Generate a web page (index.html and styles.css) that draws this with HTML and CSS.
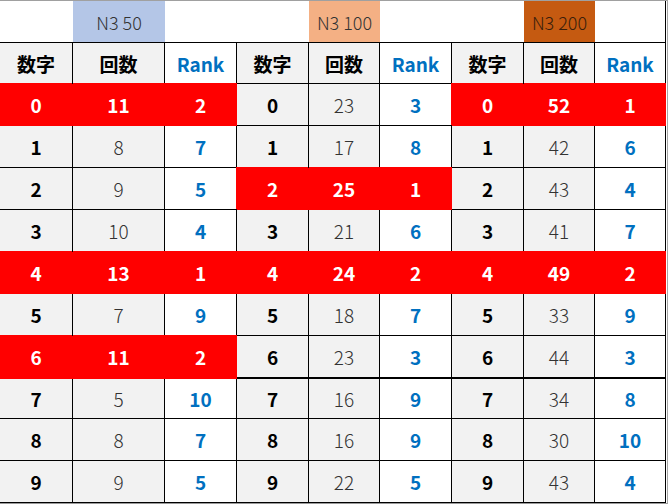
FILE: index.html
```html
<!DOCTYPE html>
<html lang="ja">
<head>
<meta charset="utf-8">
<title>N3</title>
<link rel="stylesheet" href="styles.css">
</head>
<body>
<div class="sheet">
  <div class="t"></div><div class="t t1">N3 50</div><div class="t"></div>
  <div class="t"></div><div class="t t2">N3 100</div><div class="t"></div>
  <div class="t"></div><div class="t t3">N3 200</div><div class="t tlast"></div>

  <div class="c d h">数字</div><div class="c n h">回数</div><div class="c r">Rank</div>
  <div class="c d h">数字</div><div class="c n h">回数</div><div class="c r">Rank</div>
  <div class="c d h">数字</div><div class="c n h">回数</div><div class="c r">Rank</div>

  <div class="c d hot first">0</div><div class="c n hot">11</div><div class="c r hot">2</div>
  <div class="c d">0</div><div class="c n">23</div><div class="c r">3</div>
  <div class="c d hot first">0</div><div class="c n hot">52</div><div class="c r hot">1</div>

  <div class="c d">1</div><div class="c n">8</div><div class="c r">7</div>
  <div class="c d">1</div><div class="c n">17</div><div class="c r">8</div>
  <div class="c d">1</div><div class="c n">42</div><div class="c r">6</div>

  <div class="c d">2</div><div class="c n">9</div><div class="c r">5</div>
  <div class="c d hot first">2</div><div class="c n hot">25</div><div class="c r hot">1</div>
  <div class="c d">2</div><div class="c n">43</div><div class="c r">4</div>

  <div class="c d">3</div><div class="c n">10</div><div class="c r">4</div>
  <div class="c d">3</div><div class="c n">21</div><div class="c r">6</div>
  <div class="c d">3</div><div class="c n">41</div><div class="c r">7</div>

  <div class="c d hot first">4</div><div class="c n hot">13</div><div class="c r hot">1</div>
  <div class="c d hot">4</div><div class="c n hot">24</div><div class="c r hot">2</div>
  <div class="c d hot">4</div><div class="c n hot">49</div><div class="c r hot">2</div>

  <div class="c d">5</div><div class="c n">7</div><div class="c r">9</div>
  <div class="c d">5</div><div class="c n">18</div><div class="c r">7</div>
  <div class="c d">5</div><div class="c n">33</div><div class="c r">9</div>

  <div class="c d thick hot first">6</div><div class="c n thick hot">11</div><div class="c r thick hot">2</div>
  <div class="c d thick">6</div><div class="c n thick">23</div><div class="c r thick">3</div>
  <div class="c d thick">6</div><div class="c n thick">44</div><div class="c r thick">3</div>

  <div class="c d">7</div><div class="c n">5</div><div class="c r">10</div>
  <div class="c d">7</div><div class="c n">16</div><div class="c r">9</div>
  <div class="c d">7</div><div class="c n">34</div><div class="c r">8</div>

  <div class="c d">8</div><div class="c n">8</div><div class="c r">7</div>
  <div class="c d">8</div><div class="c n">16</div><div class="c r">9</div>
  <div class="c d">8</div><div class="c n">30</div><div class="c r">10</div>

  <div class="c d">9</div><div class="c n">9</div><div class="c r">5</div>
  <div class="c d">9</div><div class="c n">22</div><div class="c r">5</div>
  <div class="c d">9</div><div class="c n">43</div><div class="c r">4</div>
</div>
</body>
</html>
```

FILE: styles.css
```css
html, body {
  margin: 0;
  padding: 0;
  background: #ffffff;
  overflow: hidden;
}

.sheet {
  display: grid;
  grid-template-columns: 73px 92px 72px 72px 71px 72px 72px 71px 71px;
  grid-template-rows: 42px 41px repeat(6, 42px) 43px 40px 42px 42px;
  width: 666px;
  padding-right: 1px;
  border-top: 1px solid #a0a0a0;
  border-right: 1px solid #a6a6a6;
  border-bottom: 1px solid #9a9a9a;
  font-family: "Noto Sans CJK JP", "Noto Sans", sans-serif;
}

.t {
  box-sizing: border-box;
  border-bottom: 1px solid #000;
  display: flex;
  align-items: center;
  justify-content: center;
  font-size: 18px;
  font-weight: 300;
  line-height: 1;
  color: #333333;
}

.tlast {
  border-right: 1px solid #000;
}

.t1 { background: #b4c6e7; }
.t2 { background: #f4b084; }
.t3 { background: #c55a11; color: #3a1e0c; }

.c {
  box-sizing: border-box;
  border-right: 1px solid #000;
  border-bottom: 1px solid #000;
  display: flex;
  align-items: center;
  justify-content: center;
  font-size: 19px;
  line-height: 1;
}

.d {
  background: #f2f2f2;
  color: #000000;
  font-weight: 700;
}

.n {
  background: #f2f2f2;
  color: #333333;
  font-weight: 300;
}

.h {
  color: #000000;
  font-weight: 700;
}

.r {
  background: #ffffff;
  color: #0070c0;
  font-weight: 700;
}

.thick {
  border-bottom-width: 2px;
}

.hot {
  position: relative;
  z-index: 1;
  background: #ff0000;
  color: #ffffff;
  font-weight: 700;
  border-color: #ff0000;
  box-shadow: 0 -1px 0 #ff0000;
}

.hot.first {
  box-shadow: -1px -1px 0 #ff0000;
}
```
